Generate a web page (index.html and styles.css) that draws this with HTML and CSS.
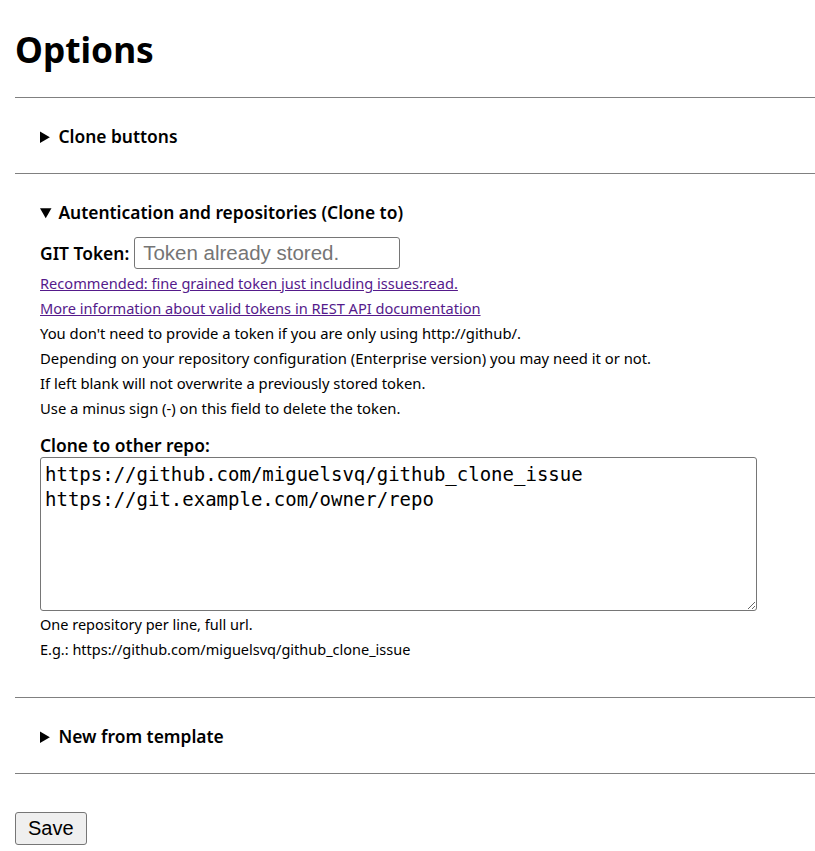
FILE: index.html
```html
<!DOCTYPE html>
<html lang="en">
<head>
<meta charset="utf-8">
<title>Options</title>
<link rel="stylesheet" href="styles.css">
</head>
<body>
<main class="page">
  <h1 class="title">Options</h1>
  <section class="panel">
    <details class="group">
      <summary class="group-head">Clone buttons</summary>
    </details>
  </section>
  <section class="panel">
    <details class="group" open>
      <summary class="group-head">Autentication and repositories (Clone to)</summary>
      <div class="group-body">
        <div class="token-row">
          <label class="field-label" for="token">GIT Token:</label>
          <input class="token-input" id="token" type="text" placeholder="Token already stored.">
        </div>
        <div class="notes">
          <a class="note-link" href="#">Recommended: fine grained token just including issues:read.</a>
          <a class="note-link" href="#">More information about valid tokens in REST API documentation</a>
          <p class="note">You don't need to provide a token if you are only using http://github/.</p>
          <p class="note">Depending on your repository configuration (Enterprise version) you may need it or not.</p>
          <p class="note">If left blank will not overwrite a previously stored token.</p>
          <p class="note">Use a minus sign (-) on this field to delete the token.</p>
        </div>
        <label class="field-label block-label" for="repos">Clone to other repo:</label>
        <textarea class="repos" id="repos">https://github.com/miguelsvq/github_clone_issue
https://git.example.com/owner/repo</textarea>
        <div class="notes tight">
          <p class="note small">One repository per line, full url.</p>
          <p class="note small">E.g.: https://github.com/miguelsvq/github_clone_issue</p>
        </div>
      </div>
    </details>
  </section>
  <section class="panel last">
    <details class="group">
      <summary class="group-head">New from template</summary>
    </details>
  </section>
  <div class="actions">
    <button class="save" type="button">Save</button>
  </div>
</main>
</body>
</html>
```

FILE: styles.css
```css
html, body {
  margin: 0;
  padding: 0;
  background: #fff;
}

body {
  font-family: "Noto Sans", "Open Sans", sans-serif;
  color: #000;
  font-size: 15px;
}

.page {
  display: flex;
  flex-direction: column;
  padding: 0 0 0 15px;
}

.title {
  font-size: 35.3px;
  font-weight: 700;
  line-height: 46px;
  margin: 26px 0 25px 0;
}

.panel {
  border-top: 1px solid #808080;
}

.panel.last {
  border-bottom: 1px solid #808080;
}

.group {
  padding: 26px 0 25px 25px;
}

.group[open] {
  padding-bottom: 35px;
}

.group-head {
  font-size: 17.4px;
  font-weight: 600;
  line-height: 24px;
  cursor: pointer;
}

.group-body {
  display: flex;
  flex-direction: column;
  align-items: flex-start;
  padding-top: 13px;
}

.token-row {
  display: flex;
  align-items: center;
  gap: 5px;
}

.field-label {
  font-size: 17.4px;
  font-weight: 600;
  line-height: 24px;
}

.token-input {
  width: 266px;
  height: 32px;
  box-sizing: border-box;
  border: 1px solid #767676;
  border-radius: 3px;
  padding: 1px 8px;
  font-family: "Liberation Sans", Arial, sans-serif;
  font-size: 20.5px;
}

.token-input::placeholder {
  color: #757575;
}

.notes {
  display: flex;
  flex-direction: column;
  padding-top: 2px;
}

.notes.tight {
  padding-top: 1px;
}

.note-link {
  color: #551a8b;
  line-height: 25px;
  font-size: 14.6px;
}

.note {
  margin: 0;
  line-height: 25px;
  font-size: 14.8px;
}

.note.small {
  font-size: 14.5px;
}

.block-label {
  margin-top: 13px;
  line-height: 23px;
}

.repos {
  display: block;
  width: 717px;
  height: 154px;
  box-sizing: border-box;
  border: 1px solid #767676;
  border-radius: 3px;
  padding: 4px 4px;
  font-family: "DejaVu Sans Mono", "Liberation Mono", monospace;
  font-size: 19px;
  line-height: 25px;
  color: #000;
  resize: both;
}

.actions {
  padding-top: 38px;
}

.save {
  font-family: "Liberation Sans", Arial, sans-serif;
  font-size: 20px;
  height: 33px;
  padding: 1px 12px;
  background: #efefef;
  border: 1px solid #767676;
  border-radius: 3px;
  color: #000;
}
```
